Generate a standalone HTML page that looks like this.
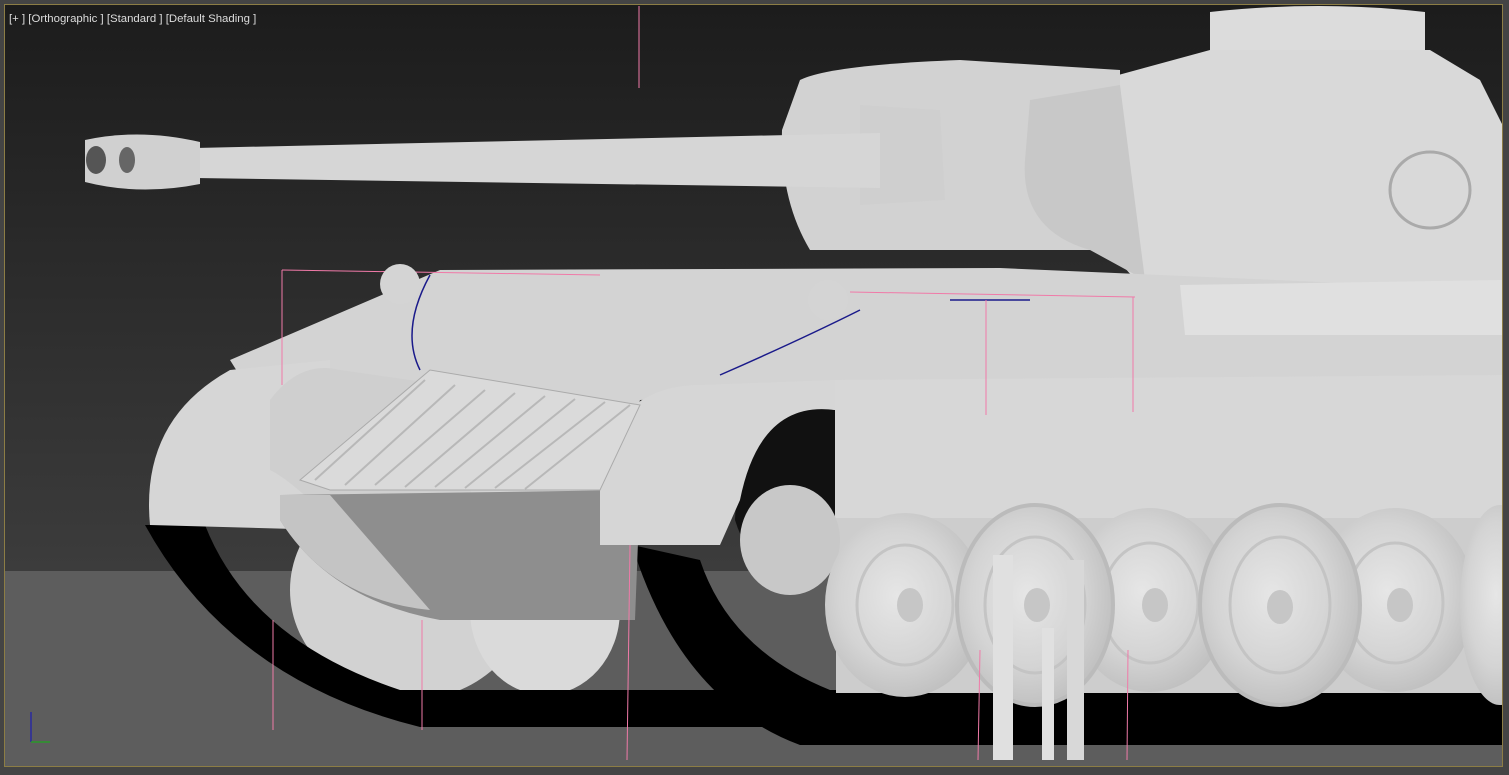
<!DOCTYPE html>
<html><head><style>
html,body{margin:0;padding:0;background:#444;width:1509px;height:775px;overflow:hidden}
.vp{position:absolute;left:4px;top:4px;width:1499px;height:763px;border:1px solid #8c7d45;box-sizing:border-box;overflow:hidden}
.lbl{position:absolute;left:4px;top:8px;font:11.4px "Liberation Sans",sans-serif;color:#ddd;white-space:pre}
</style></head><body>
<div class="vp">
<svg width="1499" height="763" viewBox="4 4 1499 763" style="position:absolute;left:-1px;top:-1px">
<defs>
<linearGradient id="bg" x1="0" y1="0" x2="0" y2="1"><stop offset="0" stop-color="#1c1c1c"/><stop offset="1" stop-color="#3c3c3c"/></linearGradient>
<radialGradient id="wh" cx="0.45" cy="0.45" r="0.6"><stop offset="0" stop-color="#e6e6e6"/><stop offset="0.6" stop-color="#d4d4d4"/><stop offset="1" stop-color="#bdbdbd"/></radialGradient>
</defs>
<rect x="4" y="4" width="1499" height="567" fill="url(#bg)"/>
<rect x="4" y="571" width="1499" height="196" fill="#5d5d5d"/>
<!-- turret -->
<path d="M1210 12 Q1320 0 1425 12 L1425 50 L1210 50Z" fill="#dcdcdc"/>
<path d="M1100 80 L1210 50 L1430 50 L1480 80 L1505 130 L1505 285 L1140 285 L1100 240Z" fill="#d9d9d9"/>
<path d="M800 80 Q830 65 960 60 L1120 70 L1120 250 L810 250 Q780 200 782 130Z" fill="#d2d2d2"/>
<path d="M1030 100 L1120 85 L1145 280 L1090 250 Q1020 230 1025 160Z" fill="#c8c8c8"/>
<ellipse cx="1430" cy="190" rx="40" ry="38" fill="none" stroke="#aaa" stroke-width="3"/>
<!-- gun -->
<path d="M860 105 L940 110 L945 200 L860 205Z" fill="#cfcfcf"/>
<path d="M195 148 L880 133 L880 188 L195 178Z" fill="#d6d6d6"/>
<path d="M85 140 Q140 128 200 142 L200 184 Q140 196 85 182Z" fill="#d0d0d0"/>
<ellipse cx="96" cy="160" rx="10" ry="14" fill="#555"/><ellipse cx="127" cy="160" rx="8" ry="13" fill="#666"/>
<!-- hull -->
<path d="M230 360 L440 270 L1000 268 L1505 290 L1505 520 L830 520 L830 390 L640 400 L600 520 L330 520Z" fill="#d3d3d3"/>
<path d="M830 380 L1505 375 L1505 518 L830 518Z" fill="#d7d7d7"/>
<path d="M1180 285 L1505 280 L1505 335 L1185 335Z" fill="#e0e0e0"/>
<!-- left wheels behind -->
<ellipse cx="410" cy="590" rx="120" ry="110" fill="#d2d2d2"/>
<ellipse cx="545" cy="610" rx="75" ry="85" fill="#dadada"/>
<!-- tracks -->
<path d="M145 525 L205 525 Q250 640 400 690 L640 690 L640 727 L420 727 Q230 680 145 525Z" fill="#000"/>
<path d="M632 545 L700 560 Q730 650 830 690 L1505 690 L1505 745 L800 745 Q680 700 632 545Z" fill="#000"/>
<rect x="420" y="690" width="400" height="37" fill="#000"/>
<path d="M740 420 Q780 400 835 410 L835 560 Q760 600 735 520Z" fill="#111"/>
<rect x="836" y="518" width="667" height="175" fill="#cdcdcd"/>
<ellipse cx="790" cy="540" rx="50" ry="55" fill="#c8c8c8"/>
<!-- road wheels -->
<g>
<ellipse cx="905" cy="605" rx="80" ry="92" fill="url(#wh)"/><ellipse cx="905" cy="605" rx="48" ry="60" fill="none" stroke="#c4c4c4" stroke-width="3"/><ellipse cx="910" cy="605" rx="13" ry="17" fill="#c6c6c6"/>
<ellipse cx="1150" cy="600" rx="80" ry="92" fill="url(#wh)"/><ellipse cx="1150" cy="603" rx="48" ry="60" fill="none" stroke="#c4c4c4" stroke-width="3"/><ellipse cx="1155" cy="605" rx="13" ry="17" fill="#c6c6c6"/>
<ellipse cx="1395" cy="600" rx="80" ry="92" fill="url(#wh)"/><ellipse cx="1395" cy="603" rx="48" ry="60" fill="none" stroke="#c4c4c4" stroke-width="3"/><ellipse cx="1400" cy="605" rx="13" ry="17" fill="#c6c6c6"/>
<ellipse cx="1035" cy="605" rx="78" ry="100" fill="url(#wh)" stroke="#bbb" stroke-width="4"/><ellipse cx="1035" cy="605" rx="50" ry="68" fill="none" stroke="#c4c4c4" stroke-width="3"/><ellipse cx="1037" cy="605" rx="13" ry="17" fill="#c6c6c6"/>
<ellipse cx="1280" cy="605" rx="80" ry="100" fill="url(#wh)" stroke="#bbb" stroke-width="4"/><ellipse cx="1280" cy="605" rx="50" ry="68" fill="none" stroke="#c4c4c4" stroke-width="3"/><ellipse cx="1280" cy="607" rx="13" ry="17" fill="#c6c6c6"/>
<ellipse cx="1500" cy="605" rx="40" ry="100" fill="url(#wh)"/>
</g>
<rect x="993" y="555" width="20" height="205" fill="#e0e0e0"/>
<rect x="1042" y="628" width="12" height="132" fill="#e0e0e0"/>
<rect x="1067" y="560" width="17" height="200" fill="#d8d8d8"/>
<!-- fenders -->
<path d="M150 525 Q140 420 230 370 L330 360 L330 530Z" fill="#d6d6d6"/>
<path d="M270 400 Q300 360 340 370 L480 390 L470 500 L320 510 Q290 480 270 470Z" fill="#cfcfcf"/>
<path d="M280 495 L640 490 L635 620 L440 620 Q330 600 280 520Z" fill="#8e8e8e"/>
<path d="M280 495 L330 495 L430 610 Q330 600 280 520Z" fill="#c4c4c4"/>
<path d="M600 545 L600 450 Q630 385 700 385 L835 380 L835 410 Q760 400 740 500 L720 545Z" fill="#d6d6d6"/>
<!-- jerry cans -->
<path d="M300 480 L430 370 L640 405 L600 490 L330 490Z" fill="#dadada" stroke="#aaa" stroke-width="1"/>
<g stroke="#b8b8b8" stroke-width="2">
<line x1="315" y1="480" x2="425" y2="380"/><line x1="345" y1="485" x2="455" y2="385"/><line x1="375" y1="485" x2="485" y2="390"/><line x1="405" y1="487" x2="515" y2="393"/><line x1="435" y1="487" x2="545" y2="396"/><line x1="465" y1="488" x2="575" y2="399"/><line x1="495" y1="488" x2="605" y2="402"/><line x1="525" y1="489" x2="630" y2="405"/>
</g>
<g fill="none" stroke="#1a1a8a" stroke-width="1.5">
<path d="M430 275 Q400 330 420 370 M860 310 Q800 340 720 375 M950 300 Q1000 300 1030 300"/>
</g>
<g stroke="#f07aa8" stroke-width="1">
<line x1="639" y1="6" x2="639" y2="88"/><line x1="282" y1="270" x2="282" y2="385"/><line x1="282" y1="270" x2="600" y2="275"/>
<line x1="850" y1="292" x2="1135" y2="297"/><line x1="986" y1="300" x2="986" y2="415"/><line x1="1133" y1="297" x2="1133" y2="412"/>
<line x1="273" y1="620" x2="273" y2="730"/><line x1="422" y1="620" x2="422" y2="730"/><line x1="630" y1="545" x2="627" y2="760"/>
<line x1="980" y1="650" x2="978" y2="760"/><line x1="1128" y1="650" x2="1127" y2="760"/>
</g>
<circle cx="400" cy="284" r="20" fill="#d4d4d4"/><circle cx="828" cy="300" r="20" fill="#d4d4d4"/>
<line x1="31" y1="742" x2="31" y2="712" stroke="#2a2aa0" stroke-width="1.5"/>
<line x1="31" y1="742" x2="50" y2="742" stroke="#2a9a2a" stroke-width="1.5"/>
</svg>
<div class="lbl">[+ ] [Orthographic ] [Standard ] [Default Shading ]</div>
</div>
</body></html>
